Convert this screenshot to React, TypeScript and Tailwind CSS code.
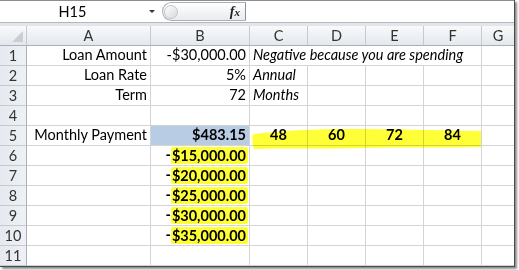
import React from "react";

const font = { fontFamily: "Lato, 'Open Sans', sans-serif" };

type Row = {
  a?: string;
  b?: string;
  c?: string;
  note?: boolean;
  payment?: boolean;
  principal?: string;
};

const rows: Row[] = [
  { a: "Loan Amount", b: "-$30,000.00", c: "Negative because you are spending", note: true },
  { a: "Loan Rate", b: "5%", c: "Annual" },
  { a: "Term", b: "72", c: "Months" },
  {},
  { a: "Monthly Payment", b: "$483.15", payment: true },
  { principal: "$15,000.00" },
  { principal: "$20,000.00" },
  { principal: "$25,000.00" },
  { principal: "$30,000.00" },
  { principal: "$35,000.00" },
  {},
];

const terms = [48, 60, 72, 84];
const cols = ["A", "B", "C", "D", "E", "F", "G"];

const cell = "h-[20px] border-b border-r border-[#d4d4d4] flex items-end pb-[1px] leading-[18px] whitespace-nowrap";
const head =
  "h-[20px] border-b border-r border-[#c5cad1] bg-gradient-to-b from-[#f8f9fb] to-[#e4e8ed] flex items-center justify-center text-[#333]";

function FormulaBar() {
  return (
    <div className="h-[23px] border-t border-b border-t-[#8e8e8e] border-b-[#b3b8bf] bg-white flex items-center">
      <div className="w-[145px] text-center text-[14.5px] leading-[20px] text-black">H15</div>
      <div className="w-[6px] h-0 border-l-[3px] border-r-[3px] border-t-[3px] border-l-transparent border-r-transparent border-t-[#333] ml-[4px]" />
      <div className="ml-[7px] w-[84px] h-[19px] rounded-l-full border border-[#aab0b7] border-r-[#8a9098] bg-gradient-to-b from-white to-[#e9ebee] flex items-center justify-between pl-[1px] pr-[5px]">
        <div className="w-[14px] h-[14px] rounded-full border border-[#c2c6cc] bg-gradient-to-br from-white to-[#d5d9de]" />
        <span
          className="text-[14px] font-bold italic text-[#222] leading-none"
          style={{ fontFamily: "'Liberation Serif', serif" }}
        >
          f<span className="text-[11px]">x</span>
        </span>
      </div>
      <div className="flex-1" />
    </div>
  );
}

export default function App() {
  return (
    <div className="w-[519px] h-[270px] bg-white overflow-hidden text-black" style={font}>
      <div className="w-[515px] bg-white border-r border-b border-[#4a4a4a] shadow-[2px_2px_2px_rgba(0,0,0,0.45)]">
        <FormulaBar />
        <div className="h-[3px] bg-[#e2e6eb]" />
        <div className="relative grid grid-cols-[27px_124px_99px_58px_58px_58px_58px_32px] text-[14.5px]">
          <div className={`${head} relative border-b-[#a9b0ba]`}>
            <svg className="absolute right-[3px] bottom-[3px]" width="11" height="11">
              <polygon points="11,0 11,11 0,11" fill="#cbcfd5" />
            </svg>
          </div>
          {cols.map((c, i) => (
            <div key={c} className={`${head} border-b-[#a9b0ba] ${i === 6 ? "border-r-0" : ""}`}>
              {c}
            </div>
          ))}

          {rows.map((r, i) => (
            <React.Fragment key={i}>
              <div className="h-[20px] border-b border-r border-[#c5cad1] border-r-[#a9b0ba] bg-gradient-to-r from-[#e6eaf0] to-[#eef1f5] flex items-center justify-center text-[#333]">
                {i + 1}
              </div>
              <div className={`${cell} justify-end pr-[3px]`}>{r.a}</div>
              {r.principal ? (
                <div className={`${cell} justify-end pr-px font-bold`}>
                  <span>-</span>
                  <span className="bg-[#ffff38] pl-px pr-[2px] h-[17px] rounded-[2px] leading-[17px]">{r.principal}</span>
                </div>
              ) : (
                <div
                  className={`${cell} justify-end pr-[3px] ${r.payment ? "bg-[#b8cce4] font-bold" : ""}`}
                >
                  {r.b}
                </div>
              )}
              {r.note ? (
                <div className={`${cell} col-span-4 pl-[3px] italic`}>{r.c}</div>
              ) : r.payment ? (
                terms.map((t) => (
                  <div key={t} className={`${cell} justify-center font-bold`}>
                    {t}
                  </div>
                ))
              ) : (
                <>
                  <div className={`${cell} pl-[3px] italic`}>{r.c}</div>
                  <div className={cell} />
                  <div className={cell} />
                  <div className={cell} />
                </>
              )}
              <div className={`${cell} border-r-0`} />
            </React.Fragment>
          ))}

          <svg
            className="absolute left-[252px] top-[102px] mix-blend-multiply pointer-events-none"
            width="230"
            height="22"
            viewBox="0 0 230 22"
          >
            <path
              d="M1,6 C30,3 60,1 100,1 C140,1 180,2 229,3 L229,19 C190,20 150,19 110,20 C70,21 35,20 2,21 C0,16 0,10 1,6 Z"
              fill="#ffff38"
            />
          </svg>
        </div>
      </div>
    </div>
  );
}
